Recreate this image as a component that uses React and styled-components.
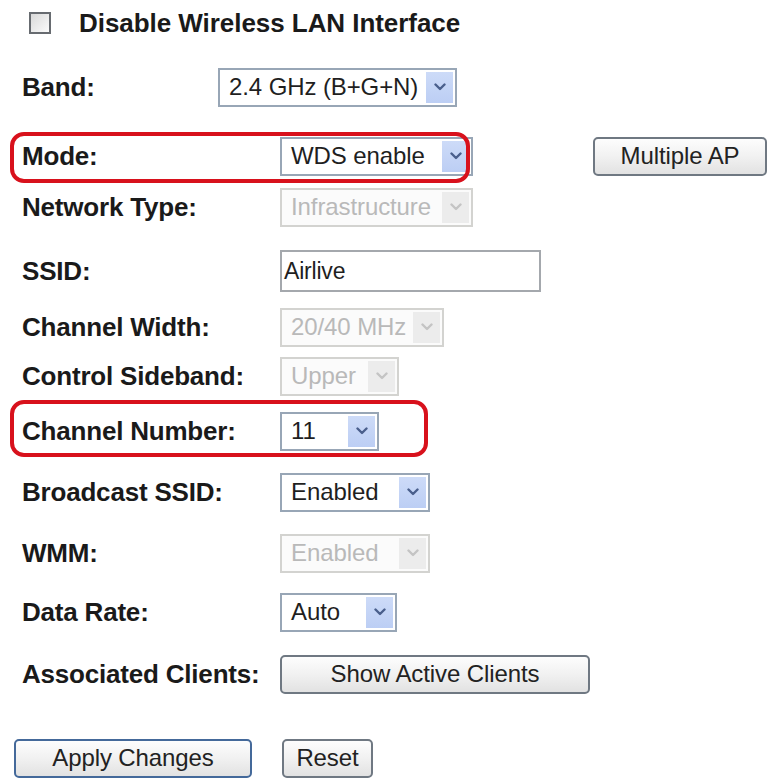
import React from "react";
import styled, { createGlobalStyle, css } from "styled-components";

const GlobalStyle = createGlobalStyle`
  html, body {
    margin: 0;
    padding: 0;
    background: #ffffff;
  }
  body {
    font-family: "Liberation Sans", Arial, sans-serif;
    color: #1a1a1a;
  }
`;

const Page = styled.form`
  display: flex;
  flex-direction: column;
  width: 768px;
  padding-top: 3px;
`;

const Row = styled.div`
  position: relative;
  display: flex;
  align-items: center;
  height: 40px;
  margin-top: ${(p) => p.$space || 0}px;

  ${(p) =>
    p.$mark &&
    css`
      &::after {
        content: "";
        position: absolute;
        left: 10px;
        top: ${p.$mark.top}px;
        width: ${p.$mark.width}px;
        height: ${p.$mark.height}px;
        box-sizing: border-box;
        border: 4.5px solid #d8111c;
        border-radius: 14px;
        pointer-events: none;
      }
    `}
`;

const Label = styled.label`
  box-sizing: border-box;
  width: ${(p) => p.$w || 280}px;
  padding-left: 22px;
  font-size: 26px;
  font-weight: bold;
  letter-spacing: -0.2px;
  white-space: nowrap;
  color: #1a1a1a;
`;

const CheckBox = styled.span`
  box-sizing: border-box;
  display: inline-block;
  width: 22px;
  height: 22px;
  margin-left: 29px;
  margin-right: 28px;
  border: 2px solid #676b70;
  background: linear-gradient(135deg, #d9d9d9, #fbfbfb);
`;

const CheckText = styled.span`
  font-size: 26px;
  font-weight: bold;
  letter-spacing: -0.05px;
  color: #1a1a1a;
  white-space: nowrap;
`;

const SelectBox = styled.div`
  box-sizing: border-box;
  display: flex;
  align-items: center;
  width: ${(p) => p.$w}px;
  height: 39px;
  padding: 2px;
  border: 2px solid ${(p) => (p.$off ? "#d3d3d0" : "#98a6b6")};
  background: ${(p) => (p.$off ? "#fbfbfb" : "#ffffff")};
`;

const SelectText = styled.span`
  flex: 1;
  padding-left: 7px;
  font-size: 24px;
  letter-spacing: -0.1px;
  white-space: nowrap;
  overflow: hidden;
  color: ${(p) => (p.$off ? "#b9b9b9" : "#1f1f1f")};
`;

const ArrowBox = styled.span`
  display: flex;
  align-items: center;
  justify-content: center;
  width: 27px;
  align-self: stretch;
  background: ${(p) =>
    p.$off
      ? "#ececec"
      : "linear-gradient(180deg, #cddbf8 0%, #bccef4 100%)"};
`;

const TextInput = styled.div`
  box-sizing: border-box;
  display: flex;
  align-items: center;
  width: ${(p) => p.$w}px;
  height: 42px;
  padding-left: 2px;
  border: 2px solid #a4a8ad;
  font-size: 23px;
  letter-spacing: -0.2px;
  color: #1f1f1f;
`;

const Button = styled.button`
  box-sizing: border-box;
  height: 39px;
  width: ${(p) => p.$w}px;
  margin-left: ${(p) => p.$left || 0}px;
  padding: 0;
  border: 2px solid ${(p) => (p.$primary ? "#44699a" : "#6f7882")};
  border-radius: 5px;
  background: linear-gradient(180deg, #fdfdfd 0%, #f1f1f1 50%, #e2e2e2 100%);
  font-family: "Liberation Sans", Arial, sans-serif;
  font-size: 24px;
  letter-spacing: -0.1px;
  color: #222222;
  cursor: pointer;
`;

const Chevron = ({ off }) => (
  <svg width="12" height="8" viewBox="0 0 12 8">
    <polyline
      points="1.5,1.5 6,6 10.5,1.5"
      fill="none"
      stroke={off ? "#c4c4c4" : "#4a5f8c"}
      strokeWidth="2.4"
      strokeLinecap="round"
      strokeLinejoin="round"
    />
  </svg>
);

const Select = ({ w, value, off }) => (
  <SelectBox $w={w} $off={off}>
    <SelectText $off={off}>{value}</SelectText>
    <ArrowBox $off={off}>
      <Chevron off={off} />
    </ArrowBox>
  </SelectBox>
);

export default function App() {
  return (
    <>
      <GlobalStyle />
      <Page onSubmit={(e) => e.preventDefault()}>
        <Row>
          <CheckBox />
          <CheckText>Disable Wireless LAN Interface</CheckText>
        </Row>

        <Row $space={24}>
          <Label $w={218}>Band:</Label>
          <Select w={239} value="2.4 GHz (B+G+N)" />
        </Row>

        <Row $space={29} $mark={{ top: -4, width: 460, height: 51 }}>
          <Label>Mode:</Label>
          <Select w={193} value="WDS enable" />
          <Button type="button" $w={174} $left={120}>
            Multiple AP
          </Button>
        </Row>

        <Row $space={11}>
          <Label>Network Type:</Label>
          <Select w={193} value="Infrastructure" off />
        </Row>

        <Row $space={24}>
          <Label>SSID:</Label>
          <TextInput $w={261}>Airlive</TextInput>
        </Row>

        <Row $space={16}>
          <Label>Channel Width:</Label>
          <Select w={164} value="20/40 MHz" off />
        </Row>

        <Row $space={9}>
          <Label>Control Sideband:</Label>
          <Select w={119} value="Upper" off />
        </Row>

        <Row $space={15} $mark={{ top: -11, width: 418, height: 57 }}>
          <Label>Channel Number:</Label>
          <Select w={99} value="11" />
        </Row>

        <Row $space={21}>
          <Label>Broadcast SSID:</Label>
          <Select w={150} value="Enabled" />
        </Row>

        <Row $space={21}>
          <Label>WMM:</Label>
          <Select w={150} value="Enabled" off />
        </Row>

        <Row $space={19}>
          <Label>Data Rate:</Label>
          <Select w={117} value="Auto" />
        </Row>

        <Row $space={22}>
          <Label>Associated Clients:</Label>
          <Button type="button" $w={310}>
            Show Active Clients
          </Button>
        </Row>

        <Row $space={44}>
          <Button type="submit" $primary $w={238} $left={14}>
            Apply Changes
          </Button>
          <Button type="reset" $w={91} $left={30}>
            Reset
          </Button>
        </Row>
      </Page>
    </>
  );
}
